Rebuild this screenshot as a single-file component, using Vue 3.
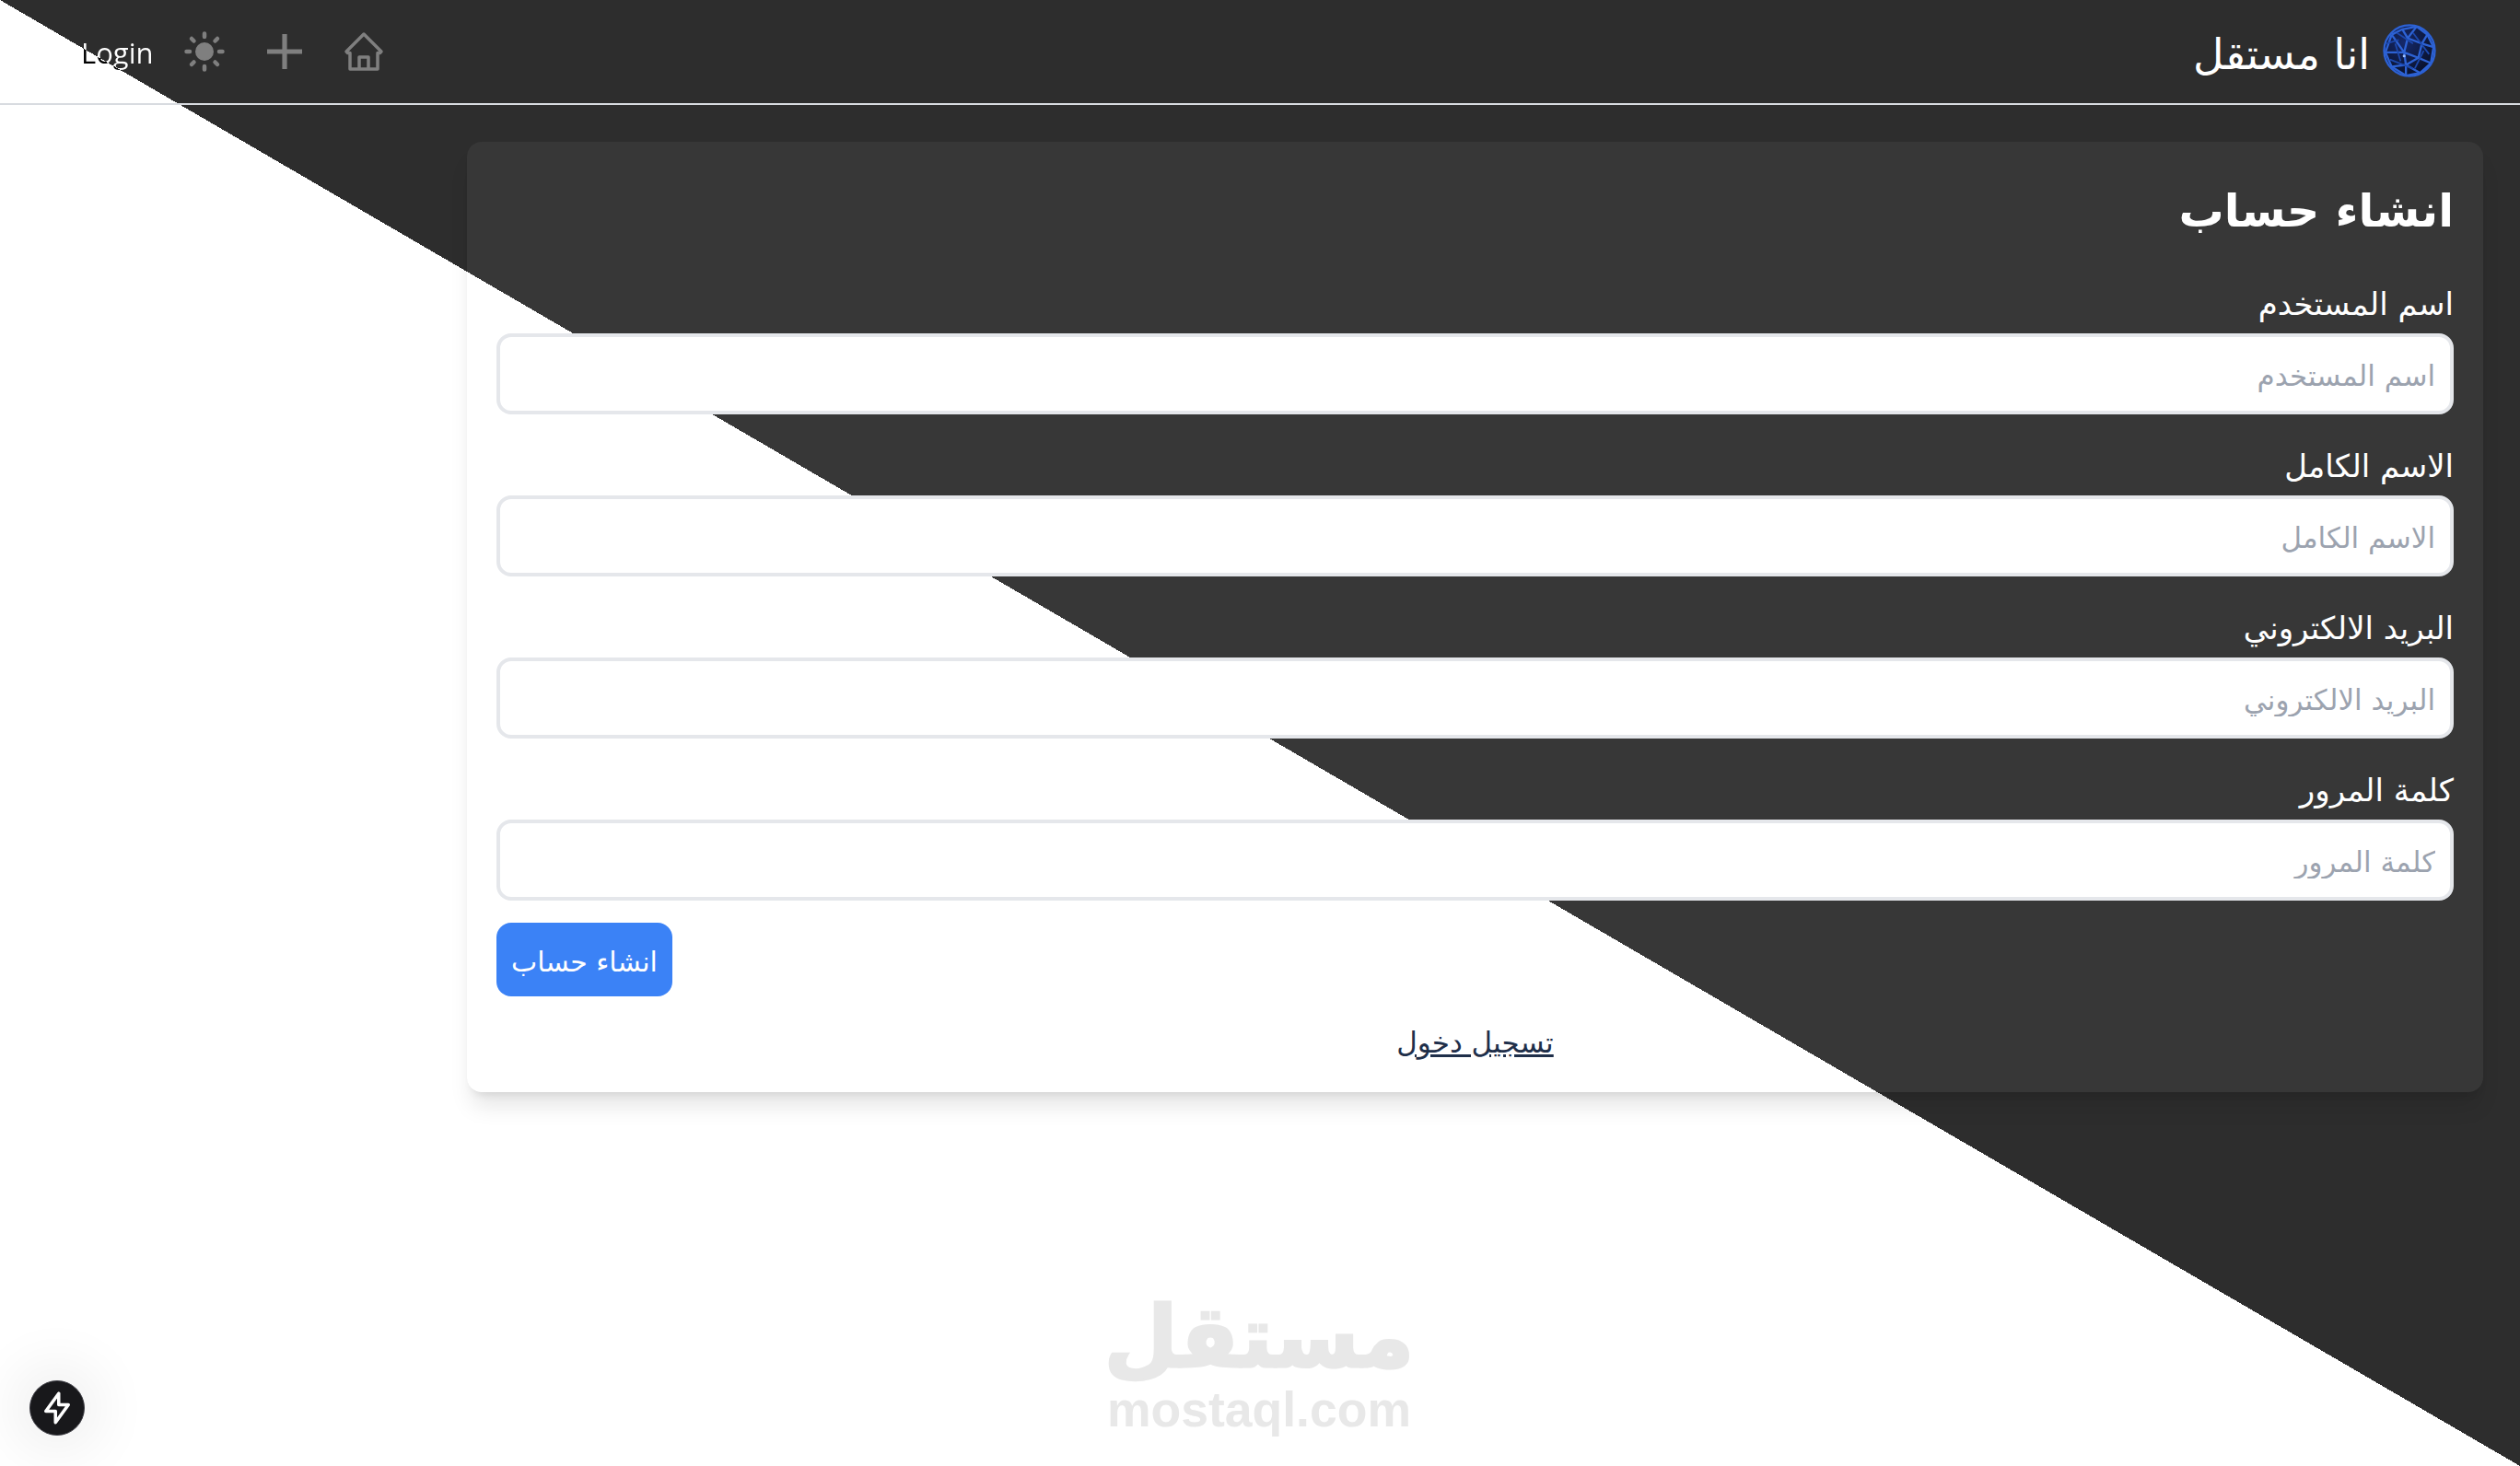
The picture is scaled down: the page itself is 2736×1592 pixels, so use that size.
<template>
  <div class="page" dir="rtl">
    <nav class="navbar">
      <div class="brand">
        <svg class="globe" viewBox="0 0 60 60">
          <defs>
            <radialGradient id="ball" cx="40%" cy="35%" r="70%">
              <stop offset="0" stop-color="#16296a" />
              <stop offset="1" stop-color="#080f26" />
            </radialGradient>
          </defs>
          <circle cx="30" cy="30" r="29.500" fill="url(#ball)" />
          <g fill="none" stroke="#2d62d4" stroke-width="2.400">
            <circle cx="30" cy="30" r="28.500" />
            <path d="M10 12 22 6 38 3 50 12 57 26 54 44 42 55 26 58 10 48 3 32 10 12" />
            <path d="M22 6 28 16 38 3M28 16 44 22 50 12M44 22 57 26M44 22 40 38 54 44M40 38 24 32 28 16M24 32 10 12M24 32 3 32M24 32 26 46 10 48M26 46 40 38M26 46 42 55M26 46 26 58" />
            <path d="M14 22 20 42M34 10 52 34M8 40 34 50M16 10 34 22M4 22 18 18M46 30 36 50" stroke="#1c48ad" stroke-width="1.800" />
          </g>
          <circle cx="24" cy="36" r="1.600" fill="#9cc0ff" />
        </svg>
        <span class="brand-name">انا مستقل</span>
      </div>
      <div class="nav-actions" dir="ltr">
        <a class="login">Login</a>
        <svg class="nav-icon" viewBox="0 0 44 44" fill="none" stroke="#7f7f7f" stroke-width="4.500" stroke-linecap="round">
          <circle cx="22" cy="22" r="10" fill="#7f7f7f" stroke="none" />
          <path d="M22 2.500v3.500M22 38v3.500M2.500 22h3.500M38 22h3.500M8 8l2.500 2.500M33.500 33.500 36 36M8 36l2.500-2.500M33.500 10.500 36 8" />
        </svg>
        <svg class="nav-icon" viewBox="0 0 44 44" fill="none" stroke="#7f7f7f" stroke-width="5.200">
          <path d="M22 3v38M3 22h38" />
        </svg>
        <svg class="nav-icon" viewBox="0 0 44 44" fill="none" stroke="#7f7f7f" stroke-width="3.500" stroke-linejoin="round">
          <path d="M22 3 3 22l1.500 1.500H7V41h30V23.500h2.500L41 22z" />
          <path d="M17 41V28h10v13" />
        </svg>
      </div>
    </nav>

    <main class="content">
      <form class="card" @submit.prevent>
        <h1>انشاء حساب</h1>
        <div v-for="field in fields" :key="field" class="field">
          <label>{{ field }}</label>
          <input type="text" :placeholder="field" />
        </div>
        <button class="submit">انشاء حساب</button>
        <div class="switch"><a href="#">تسجيل دخول</a></div>
      </form>
    </main>

    <button class="dev-btn" dir="ltr">
      <svg viewBox="0 0 24 24" fill="none" stroke="#fff" stroke-width="2" stroke-linecap="round" stroke-linejoin="round">
        <path d="M13 3v7h6l-8 11v-7H5l8-11" />
      </svg>
    </button>

    <div class="watermark">
      <div class="wm-ar">مستقل</div>
      <div class="wm-en" dir="ltr">mostaql.com</div>
    </div>
  </div>
</template>

<script setup>
const fields = ['اسم المستخدم', 'الاسم الكامل', 'البريد الالكتروني', 'كلمة المرور']
</script>

<style>
html, body { margin: 0; padding: 0; }
</style>

<style scoped>
.page {
  position: relative;
  height: 1592px;
  overflow: hidden;
  background: linear-gradient(to top right, #fff 50%, #2d2d2d 50%);
  font-family: "DejaVu Sans", sans-serif;
  font-size: 30px;
  color: #fff;
}

.navbar {
  height: 112px;
  border-bottom: 2px solid #d8dbe0;
  display: flex;
  align-items: center;
  justify-content: space-between;
  padding: 0 91px 0 88px;
}
.brand { display: flex; align-items: center; gap: 14px; font-size: 46px; }
.brand-name { padding-top: 5px; }
.globe { width: 58px; height: 58px; margin-top: -2px; }

.nav-actions { display: flex; align-items: center; gap: 42.500px; }
/* text flips colour along the page diagonal */
.login {
  font-family: "Open Sans", sans-serif;
  font-size: 31px;
  padding-top: 2px;
  margin-right: -9px;
  color: transparent;
  background: linear-gradient(to top right, #000 50%, #fff 50%) fixed;
  -webkit-background-clip: text;
  background-clip: text;
}
.nav-icon { width: 44px; height: 44px; }

.content { padding: 40px 40px 0 0; }
.card {
  width: 2189px;
  box-sizing: border-box;
  height: 1032px;
  padding: 32px;
  border-radius: 16px;
  background: rgba(255, 255, 255, 0.05);
  box-shadow: 0 20px 25px -5px rgba(0, 0, 0, 0.1), 0 8px 10px -6px rgba(0, 0, 0, 0.1);
}
h1 { margin: 0 0 29px; padding-top: 5px; font-size: 49px; line-height: 78px; font-weight: 700; }
.field { margin-bottom: 24px; }
.field label { display: block; height: 64px; line-height: 64px; font-size: 34px; }
.field input {
  display: block;
  width: 100%;
  height: 88px;
  box-sizing: border-box;
  border: 4px solid #e5e7eb;
  border-radius: 16px;
  padding: 4px 16px 0;
  background: #fff;
  font: inherit;
  font-size: 31px;
  color: #111;
}
.field input::placeholder { color: #9ca3af; }
.submit {
  display: block;
  width: 191px;
  height: 80px;
  margin-right: auto;
  padding: 4px 0 0;
  border: 0;
  border-radius: 16px;
  background: #3b82f6;
  color: #fff;
  font: inherit;
  font-size: 30px;
}
.switch { text-align: center; margin-top: 32px; }
.switch a { color: #1f2f4a; text-decoration: underline; font-size: 31px; }

.dev-btn {
  position: absolute;
  left: 32px;
  bottom: 33px;
  width: 60px;
  height: 60px;
  padding: 0;
  border: 1px solid #3f3f46;
  border-radius: 50%;
  background: #18181b;
  box-shadow: 0 0 60px 20px rgba(0, 0, 0, 0.06);
  display: flex;
  align-items: center;
  justify-content: center;
}
.dev-btn svg { width: 42px; height: 42px; }

.watermark {
  position: absolute;
  left: 1203px;
  top: 1396px;
  width: 328px;
  display: flex;
  flex-direction: column;
  align-items: center;
  color: #e8e8e8;
  font-family: "Liberation Sans", sans-serif;
  font-weight: 700;
}
.wm-ar {
  font-family: "DejaVu Sans", sans-serif;
  font-size: 92px;
  line-height: 114px;
  white-space: nowrap;
  -webkit-text-stroke: 3px #e8e8e8;
}
.wm-en { font-size: 53.500px; line-height: 42px; white-space: nowrap; }
</style>
